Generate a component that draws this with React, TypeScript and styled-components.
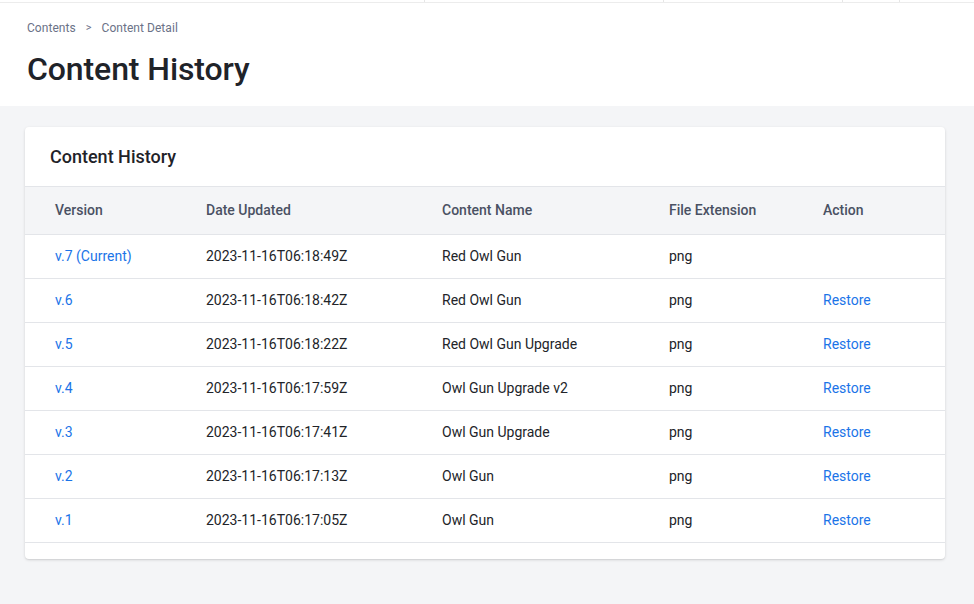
import React from "react";
import styled, { createGlobalStyle } from "styled-components";

const Global = createGlobalStyle`
  html, body { margin: 0; padding: 0; background: #f4f5f7; }
  body { font-family: Roboto, "Noto Sans", "Liberation Sans", sans-serif; -webkit-font-smoothing: antialiased; }
  * { box-sizing: border-box; }
`;

const Page = styled.div`
  min-height: 604px;
  background: #f4f5f7;
`;

const TopStrip = styled.div`
  display: flex;
  height: 3px;
  background: #fff;
  border-bottom: 1px solid #ececec;
`;

const StripCell = styled.div<{ $w?: number }>`
  flex: ${(p) => (p.$w ? `0 0 ${p.$w}px` : "1 1 auto")};
  border-right: 1px solid #e6e6e6;
  &:last-child { border-right: none; }
`;

const Header = styled.header`
  background: #fff;
  padding: 18px 27px 20px;
  height: 103px;
`;

const Breadcrumb = styled.nav`
  display: flex;
  align-items: center;
  gap: 10px;
  font-size: 12px;
  color: #6b7287;
  line-height: 14px;
  letter-spacing: 0.05px;
`;

const Chevron = styled.span`
  font-size: 11px;
  color: #6b7287;
`;

const Title = styled.h1`
  margin: 15px 0 0;
  font-size: 32px;
  font-weight: 500;
  color: #1f2329;
  line-height: 38px;
  letter-spacing: -0.1px;
`;

const Body = styled.main`
  padding: 21px 29px 40px 25px;
`;

const Card = styled.section`
  background: #fff;
  border-radius: 4px;
  box-shadow: 0 1px 3px rgba(0, 0, 0, 0.14), 0 1px 1px rgba(0, 0, 0, 0.04);
  padding-bottom: 16px;
  overflow: hidden;
`;

const CardTitle = styled.h2`
  margin: 0;
  height: 60px;
  display: flex;
  align-items: center;
  padding: 0 25px;
  font-size: 18px;
  font-weight: 500;
  color: #1f2329;
  border-bottom: 1px solid #e3e5e9;
`;

const Row = styled.div<{ $head?: boolean }>`
  display: grid;
  grid-template-columns: 181px 236px 227px 154px 1fr;
  align-items: center;
  height: ${(p) => (p.$head ? 48 : 44)}px;
  padding-bottom: 2px;
  background: ${(p) => (p.$head ? "#f4f5f7" : "#fff")};
  border-bottom: 1px solid #e3e5e9;
  font-size: 14px;
  font-weight: ${(p) => (p.$head ? 500 : 400)};
  color: ${(p) => (p.$head ? "#4a5163" : "#222429")};
  & > :first-child { padding-left: 30px; }
`;

const Cell = styled.div`
  white-space: nowrap;
`;

const Link = styled.a`
  color: #1b74e8;
  text-decoration: none;
  cursor: pointer;
`;

const rows = [
  { v: "v.7 (Current)", d: "2023-11-16T06:18:49Z", n: "Red Owl Gun", e: "png", r: false },
  { v: "v.6", d: "2023-11-16T06:18:42Z", n: "Red Owl Gun", e: "png", r: true },
  { v: "v.5", d: "2023-11-16T06:18:22Z", n: "Red Owl Gun Upgrade", e: "png", r: true },
  { v: "v.4", d: "2023-11-16T06:17:59Z", n: "Owl Gun Upgrade v2", e: "png", r: true },
  { v: "v.3", d: "2023-11-16T06:17:41Z", n: "Owl Gun Upgrade", e: "png", r: true },
  { v: "v.2", d: "2023-11-16T06:17:13Z", n: "Owl Gun", e: "png", r: true },
  { v: "v.1", d: "2023-11-16T06:17:05Z", n: "Owl Gun", e: "png", r: true },
];

export default function App() {
  return (
    <Page>
      <Global />
      <TopStrip>
        <StripCell $w={425} />
        <StripCell $w={239} />
        <StripCell $w={179} />
        <StripCell $w={57} />
        <StripCell />
      </TopStrip>
      <Header>
        <Breadcrumb>
          <span>Contents</span>
          <Chevron>&gt;</Chevron>
          <span>Content Detail</span>
        </Breadcrumb>
        <Title>Content History</Title>
      </Header>
      <Body>
        <Card>
          <CardTitle>Content History</CardTitle>
          <Row $head>
            <Cell>Version</Cell>
            <Cell>Date Updated</Cell>
            <Cell>Content Name</Cell>
            <Cell>File Extension</Cell>
            <Cell>Action</Cell>
          </Row>
          {rows.map((r) => (
            <Row key={r.v}>
              <Cell><Link>{r.v}</Link></Cell>
              <Cell>{r.d}</Cell>
              <Cell>{r.n}</Cell>
              <Cell>{r.e}</Cell>
              <Cell>{r.r ? <Link>Restore</Link> : null}</Cell>
            </Row>
          ))}
        </Card>
      </Body>
    </Page>
  );
}
